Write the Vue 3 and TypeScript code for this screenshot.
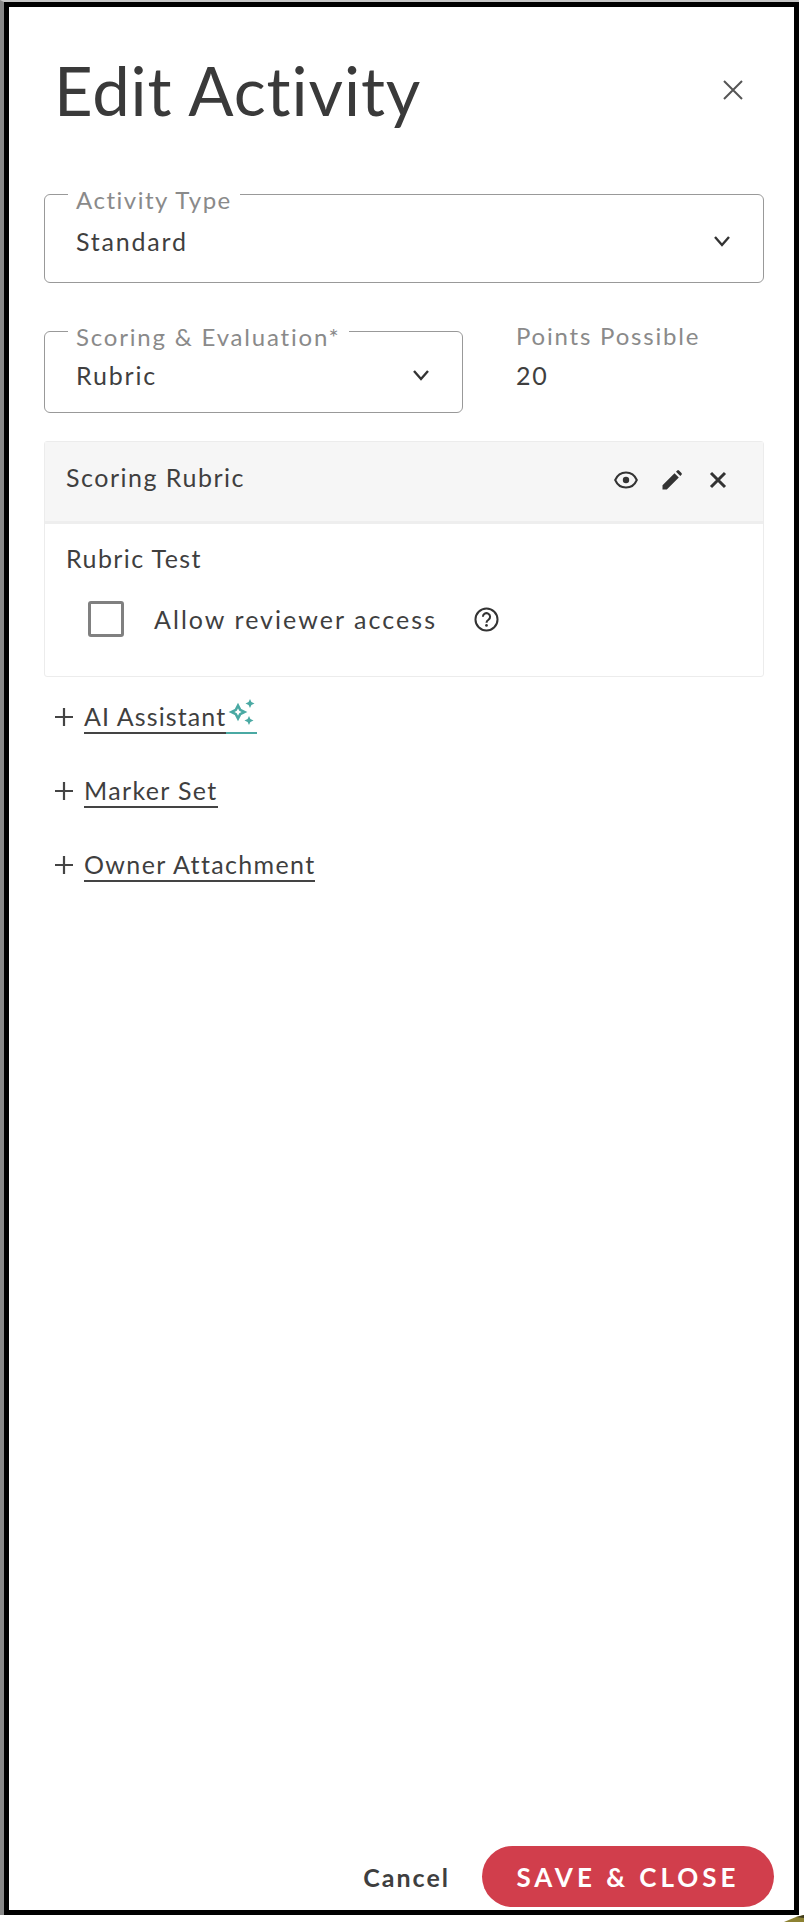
<script setup lang="ts">
const extras = [
  { label: 'AI Assistant', ai: true },
  { label: 'Marker Set', ai: false },
  { label: 'Owner Attachment', ai: false }
]
</script>

<template>
  <div class="frame">
    <div class="window">
      <div class="panel">
        <header class="head">
          <h1>Edit Activity</h1>
          <button class="close" aria-label="Close">
            <svg viewBox="0 0 24 24" width="24" height="24"><path d="M3 3l18 18M21 3L3 21" fill="none" stroke="#555" stroke-width="2"/></svg>
          </button>
        </header>

        <fieldset class="select full">
          <legend>Activity Type</legend>
          <div class="value">
            <span>Standard</span>
            <svg viewBox="0 0 18 12" width="18" height="12"><path d="M2 2l7 8 7-8" fill="none" stroke="#333" stroke-width="2.400"/></svg>
          </div>
        </fieldset>

        <div class="scoring">
          <fieldset class="select half">
            <legend>Scoring &amp; Evaluation*</legend>
            <div class="value">
              <span>Rubric</span>
              <svg viewBox="0 0 18 12" width="18" height="12"><path d="M2 2l7 8 7-8" fill="none" stroke="#333" stroke-width="2.400"/></svg>
            </div>
          </fieldset>
          <div class="points">
            <div class="points-label">Points Possible</div>
            <div class="points-value">20</div>
          </div>
        </div>

        <section class="rubric">
          <div class="rubric-head">
            <span class="rubric-title">Scoring Rubric</span>
            <div class="rubric-icons">
              <svg viewBox="0 0 24 24" width="24" height="24"><path d="M12 4.500C7 4.500 3 7.800 1.200 12 3 16.200 7 19.500 12 19.500s9-3.300 10.800-7.500C21 7.800 17 4.500 12 4.500z" fill="none" stroke="#333" stroke-width="2"/><circle cx="12" cy="12" r="3.200" fill="#333"/></svg>
              <svg viewBox="0 0 24 24" width="24" height="24"><path d="M2.500 21.500v-4.300L14.500 5.200l4.300 4.300-12 12zM16 3.700l1.200-1.200a1.300 1.300 0 0 1 1.800 0l2.500 2.500a1.300 1.300 0 0 1 0 1.800L20.300 8z" fill="#333"/></svg>
              <svg viewBox="0 0 24 24" width="24" height="24"><path d="M5 5l14 14M19 5L5 19" fill="none" stroke="#333" stroke-width="3"/></svg>
            </div>
          </div>
          <div class="rubric-body">
            <div class="rubric-name">Rubric Test</div>
            <label class="check">
              <span class="box"></span>
              <span class="check-text">Allow reviewer access</span>
              <svg class="help" viewBox="0 0 24 24" width="27" height="27"><circle cx="12" cy="12" r="9.800" fill="none" stroke="#333" stroke-width="1.800"/><path d="M8.800 9.600a3.200 3.200 0 1 1 5 2.600c-1.100.8-1.800 1.300-1.800 2.600" fill="none" stroke="#333" stroke-width="1.800"/><circle cx="12" cy="17.300" r="1.200" fill="#333"/></svg>
            </label>
          </div>
        </section>

        <div class="extras">
          <div v-for="item in extras" :key="item.label" class="extra">
            <svg viewBox="0 0 20 20" width="20" height="20"><path d="M10 1v18M1 10h18" fill="none" stroke="#444" stroke-width="2.200"/></svg>
            <a class="extra-link" :class="{ ai: item.ai }">
              <span class="extra-text">{{ item.label }}</span>
              <span v-if="item.ai" class="spark-wrap">
                <svg class="spark" viewBox="0 0 28 28" width="28" height="28"><path d="M10 7.500l2.200 4.300 4.300 2.200-4.300 2.200L10 20.500l-2.200-4.300L3.500 14l4.300-2.200z" fill="none" stroke="#4aa9a3" stroke-width="2.600"/><path d="M22 1l1.400 3.100L26.500 5.500l-3.100 1.400L22 10l-1.400-3.100L17.500 5.500l3.100-1.400zM21 18l1.400 3.100 3.100 1.400-3.100 1.400L21 27l-1.400-3.100-3.100-1.400 3.100-1.400z" fill="#4aa9a3"/></svg>
              </span>
            </a>
          </div>
        </div>

        <footer class="actions">
          <button class="cancel">Cancel</button>
          <button class="save">SAVE &amp; CLOSE</button>
        </footer>
      </div>
    </div>
    <svg class="corner" viewBox="0 0 20 7" width="20" height="7"><path d="M0 7L12 2l8-2v7z" fill="#8d8232"/><path d="M12 2l8-2v3z" fill="#3e3a1c"/></svg>
  </div>
</template>

<style scoped>
.frame {
  position: relative;
  box-sizing: border-box;
  width: 804px;
  height: 1922px;
  background: #fff;
  font-family: "Lato", "Liberation Sans", sans-serif;
  font-size: 25px;
  letter-spacing: 1.35px;
  color: #3f3f3f;
}

.window {
  box-sizing: border-box;
  width: 799px;
  height: 1915px;
  border-top: 2px solid #c6c6c6;
  border-left: 4px solid #888;
}

.panel {
  box-sizing: border-box;
  height: 100%;
  border: 5px solid #000;
  background: #fff;
  display: flex;
  flex-direction: column;
  padding: 0 30px 0 35px;
}

.head {
  display: flex;
  align-items: center;
  justify-content: space-between;
  flex: none;
  height: 167px;
  padding: 0 19px 1px 10px;
  box-sizing: border-box;
}

.head h1 {
  margin: 0;
  font-size: 67px;
  font-weight: 400;
  letter-spacing: 0.9px;
  color: #3a3a3a;
}

.close {
  display: flex;
  padding: 0;
  border: none;
  background: none;
}

.select {
  box-sizing: border-box;
  flex: none;
  margin: 0;
  padding: 0 32px 0 31px;
  border: 1.500px solid #999;
  border-radius: 6px;
  min-width: 0;
}

.select legend {
  margin-left: -8px;
  padding: 12px 8px 0;
  font-size: 24px;
  line-height: 24px;
  letter-spacing: 1.8px;
  color: #8a8a8a;
}

.select.full legend {
  letter-spacing: 1.5px;
}

.select.full {
  height: 107px;
  margin-top: 2px;
}

.value {
  display: flex;
  align-items: center;
  justify-content: space-between;
  line-height: 36px;
  letter-spacing: 1.8px;
  margin-top: 11px;
}

.scoring {
  display: flex;
  flex: none;
  align-items: flex-start;
  margin-top: 30px;
}

.select.half {
  width: 419px;
  height: 100px;
}

.select.half .value {
  margin-top: 8px;
}

.points {
  margin-left: 53px;
  padding-top: 11px;
}

.points-label {
  font-size: 24px;
  line-height: 24px;
  letter-spacing: 1.8px;
  color: #8a8a8a;
}

.points-value {
  line-height: 36px;
  letter-spacing: 1.8px;
  margin-top: 9px;
}

.rubric {
  flex: none;
  margin-top: 28px;
  border: 1px solid #ececec;
  border-radius: 3px;
}

.rubric-head {
  display: flex;
  align-items: center;
  justify-content: space-between;
  box-sizing: border-box;
  height: 82px;
  padding: 0 33px 9px 21px;
  background: #f6f6f6;
  border-bottom: 3px solid #eee;
}

.rubric-title {
  letter-spacing: 1.5px;
}

.rubric-icons {
  display: flex;
  gap: 22px;
  align-items: center;
  margin-bottom: -5px;
}

.rubric-body {
  box-sizing: border-box;
  height: 152px;
  padding: 19px 21px 0;
}

.rubric-name {
  line-height: 30px;
  letter-spacing: 1.4px;
}

.check {
  display: flex;
  align-items: center;
  margin-top: 28px;
  padding-left: 22px;
}

.box {
  box-sizing: border-box;
  width: 36px;
  height: 36px;
  border: 3.500px solid #808080;
  border-radius: 3px;
}

.check-text {
  margin-left: 30px;
  letter-spacing: 2.05px;
}

.help {
  margin-left: 36px;
}

.extras {
  display: flex;
  flex: none;
  flex-direction: column;
  gap: 30px;
  margin-top: 18px;
}

.extra {
  display: flex;
  align-items: center;
  gap: 10px;
  height: 44px;
  padding-left: 10px;
}

.extra-link {
  display: flex;
  height: 33px;
}

.extra-link.ai {
  letter-spacing: 1.1px;
}

.extra-text {
  box-sizing: border-box;
  line-height: 30px;
  border-bottom: 2px solid #444;
}

.spark-wrap {
  box-sizing: border-box;
  display: block;
  width: 31px;
  border-bottom: 2px solid #4aa9a3;
}

.spark {
  display: block;
  margin: -3px 0 0 2px;
}

.actions {
  display: flex;
  flex: none;
  align-items: center;
  justify-content: flex-end;
  gap: 32px;
  margin: auto -10px 3px 0;
}

.cancel {
  padding: 0;
  border: none;
  background: none;
  font: 700 25px "Lato", "Liberation Sans", sans-serif;
  letter-spacing: 2px;
  color: #3f3f3f;
}

.save {
  width: 292px;
  height: 61px;
  border: none;
  border-radius: 31px;
  background: #d13e4c;
  color: #fff;
  font: 700 26px "Lato", "Liberation Sans", sans-serif;
  letter-spacing: 4px;
}

.corner {
  position: absolute;
  right: 0;
  bottom: 0;
}
</style>
